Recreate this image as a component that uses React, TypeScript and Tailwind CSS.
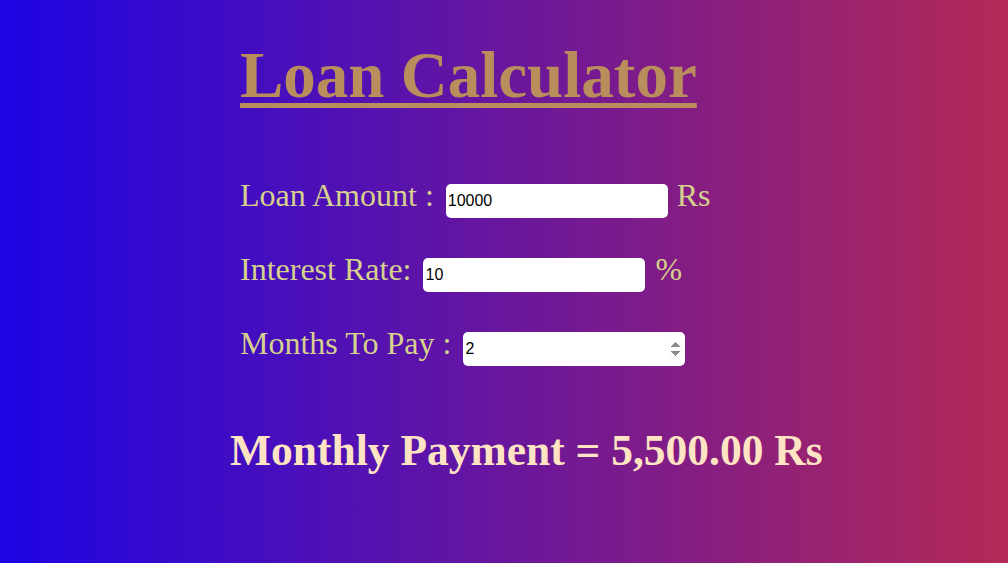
import { useState } from "react"

// Loan calculator: three inputs and the monthly payment line.

const serif = "font-['Liberation_Serif','Times_New_Roman',serif]"
const inputBase =
  "h-[34px] w-[222px] ml-[12px] rounded-[5px] border-0 bg-white px-[2px] text-[16px] text-black outline-none font-['Liberation_Sans',Arial,sans-serif]"

function formatMoney(n: number) {
  return n.toLocaleString("en-US", { minimumFractionDigits: 2, maximumFractionDigits: 2 })
}

export default function App() {
  const [amount, setAmount] = useState("10000")
  const [rate, setRate] = useState("10")
  const [months, setMonths] = useState("2")

  const a = parseFloat(amount) || 0
  const r = parseFloat(rate) || 0
  const m = parseFloat(months) || 1
  const monthly = (a + a * (r / 100)) / m

  return (
    <div className={`h-[563px] w-full overflow-hidden bg-[linear-gradient(to_right,#1d04e4,#b42956)] pl-[230px] ${serif}`}>
      <h1 className="ml-[10px] pt-[27px] text-[65px] leading-normal font-bold text-[#b98e5c] underline decoration-[5px] underline-offset-[6px]">
        Loan Calculator
      </h1>

      <div className="ml-[10px] mt-[46px] flex flex-col gap-[34px] text-[32px] text-[#d6d18d]">
        <div className="flex h-[40px] items-baseline">
          <span>Loan Amount :</span>
          <input type="text" value={amount} onChange={(e) => setAmount(e.target.value)} className={inputBase} />
          <span className="ml-[9px]">Rs</span>
        </div>
        <div className="flex h-[40px] items-baseline">
          <span>Interest Rate:</span>
          <input type="text" value={rate} onChange={(e) => setRate(e.target.value)} className={inputBase} />
          <span className="ml-[10px]">%</span>
        </div>
        <div className="flex h-[40px] items-baseline">
          <span>Months To Pay :</span>
          <input
            type="number"
            autoFocus
            value={months}
            onChange={(e) => setMonths(e.target.value)}
            className={inputBase}
          />
        </div>
      </div>

      <p className="mt-[59px] text-[43.5px] leading-normal font-bold text-[#ffe4c4]">
        Monthly Payment = {formatMoney(monthly)} Rs
      </p>
    </div>
  )
}
